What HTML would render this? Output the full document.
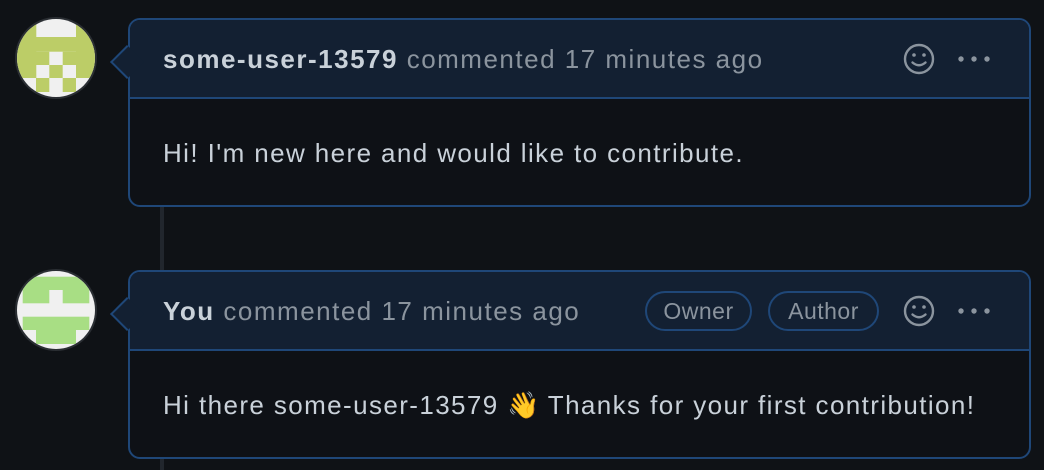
<!DOCTYPE html>
<html><head><style>
html,body{margin:0;padding:0;background:#0f1216;width:1044px;height:470px;overflow:hidden;font-family:"Liberation Sans",Helvetica,Arial,sans-serif;}
.line{position:absolute;left:160px;width:4px;background:#21262d;}
.card{position:absolute;left:128px;width:899px;border:2px solid #1f4778;border-radius:12px;background:#0e1116;}
.hdr{height:77px;background:#132032;border-bottom:2px solid #1f4778;border-radius:10px 10px 0 0;position:relative;}
.ptr{position:absolute;left:-15px;top:30px;width:22px;height:22px;background:#132032;border-left:2px solid #1f4778;border-bottom:2px solid #1f4778;transform:rotate(45deg);}
.ht{position:absolute;left:33px;top:24px;font-size:26px;letter-spacing:1.5px;color:#8b949e;white-space:nowrap;}
.ht b{color:#c9d1d9;}
.body{position:absolute;left:33px;font-size:26px;letter-spacing:1.4px;color:#c9d1d9;white-space:nowrap;}
.badge{position:absolute;top:19px;height:36px;border:2px solid #1f4778;border-radius:20px;color:#8b949e;font-size:23px;letter-spacing:0.5px;line-height:36px;text-align:center;box-sizing:content-box;}
</style></head><body>
<div class="line" style="top:205px;height:66px"></div>
<div class="line" style="top:458px;height:12px"></div>

<svg style="position:absolute;left:0;top:0" width="120" height="470">
<defs>
<clipPath id="c1"><circle cx="56" cy="58" r="39"/></clipPath>
<clipPath id="c2"><circle cx="56" cy="310" r="39"/></clipPath>
</defs>
<circle cx="56" cy="58" r="41" fill="#2a2e33"/>
<g clip-path="url(#c1)">
<rect x="0" y="0" width="120" height="120" fill="#f0f0f0"/>
<g fill="#bccd67">
<rect x="10" y="23" width="26.3" height="55"/>
<rect x="76" y="23" width="26" height="55"/>
<rect x="36" y="37" width="40" height="14.7"/>
<rect x="36" y="51.7" width="13.3" height="13.3"/>
<rect x="62.7" y="51.7" width="13.3" height="13.3"/>
<rect x="49.3" y="65" width="13.4" height="13"/>
<rect x="36" y="78" width="13.3" height="14"/>
<rect x="62.7" y="78" width="13.3" height="14"/>
</g></g>
<circle cx="56" cy="310" r="41" fill="#2a2e33"/>
<g clip-path="url(#c2)">
<rect x="0" y="250" width="120" height="120" fill="#f0f0f0"/>
<g fill="#a8de84">
<rect x="22.7" y="276.7" width="66.6" height="13.3"/>
<rect x="22.7" y="290" width="26.6" height="13.3"/>
<rect x="62.7" y="290" width="26.6" height="13.3"/>
<rect x="22.7" y="316.7" width="66.6" height="13.3"/>
<rect x="36" y="330" width="40" height="14"/>
</g></g>
</svg>

<div class="card" style="top:18px;height:185px">
 <div class="hdr"><div class="ptr"></div>
  <div class="ht"><b>some-user-13579</b> commented 17 minutes ago</div>
  <svg style="position:absolute;left:770px;top:22px" width="100" height="36">
   <circle cx="19" cy="17" r="14" fill="none" stroke="#8b949e" stroke-width="2.4"/>
   <circle cx="14" cy="13" r="1.8" fill="#8b949e"/><circle cx="24" cy="13" r="1.8" fill="#8b949e"/>
   <path d="M12.5 20.5 Q19 26 25.5 20.5" fill="none" stroke="#8b949e" stroke-width="2.4" stroke-linecap="round"/>
   <circle cx="61" cy="17" r="2.7" fill="#8b949e"/><circle cx="74" cy="17" r="2.7" fill="#8b949e"/><circle cx="87" cy="17" r="2.7" fill="#8b949e"/>
  </svg>
 </div>
 <div class="body" style="top:118px">Hi! I'm new here and would like to contribute.</div>
</div>

<div class="card" style="top:270px;height:185px">
 <div class="hdr"><div class="ptr"></div>
  <div class="ht"><b>You</b> commented 17 minutes ago</div>
  <div class="badge" style="left:515px;width:103px">Owner</div>
  <div class="badge" style="left:638px;width:107px">Author</div>
  <svg style="position:absolute;left:770px;top:22px" width="100" height="36">
   <circle cx="19" cy="17" r="14" fill="none" stroke="#8b949e" stroke-width="2.4"/>
   <circle cx="14" cy="13" r="1.8" fill="#8b949e"/><circle cx="24" cy="13" r="1.8" fill="#8b949e"/>
   <path d="M12.5 20.5 Q19 26 25.5 20.5" fill="none" stroke="#8b949e" stroke-width="2.4" stroke-linecap="round"/>
   <circle cx="61" cy="17" r="2.7" fill="#8b949e"/><circle cx="74" cy="17" r="2.7" fill="#8b949e"/><circle cx="87" cy="17" r="2.7" fill="#8b949e"/>
  </svg>
 </div>
 <div class="body" style="top:118px">Hi there some-user-13579 <span style="font-family:'Noto Color Emoji','DejaVu Sans',sans-serif;color:#f5b731;letter-spacing:0">👋</span> Thanks for your first contribution!</div>
</div>
</body></html>
